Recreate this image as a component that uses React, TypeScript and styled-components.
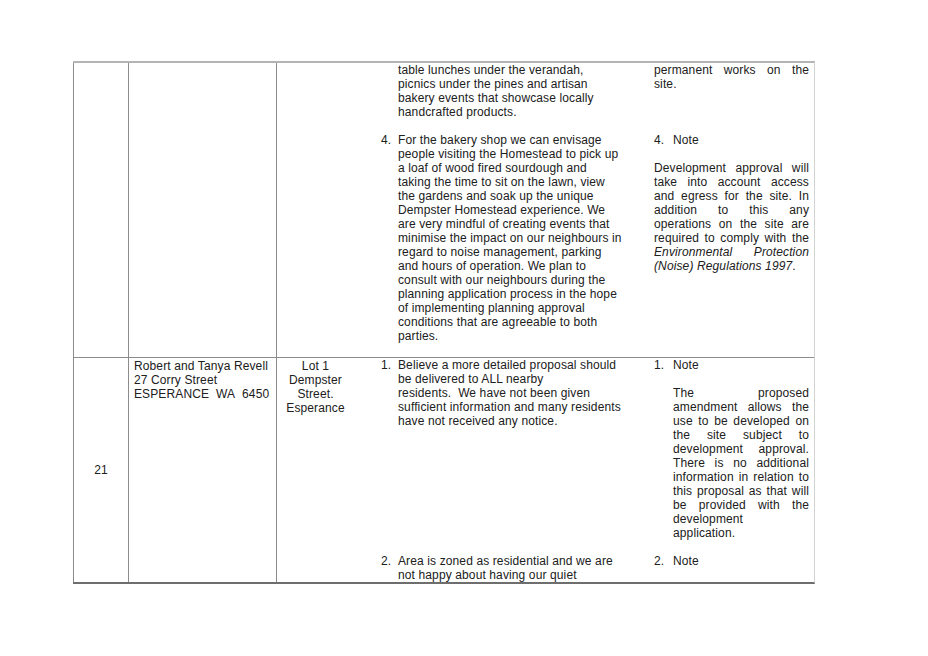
import React from 'react';
import styled, { createGlobalStyle } from 'styled-components';

const Global = createGlobalStyle`
  html, body { margin: 0; padding: 0; background: #fff; }
  body {
    font-family: "Liberation Sans", Arial, sans-serif;
    font-size: 12px;
    line-height: 14px;
    letter-spacing: 0.12px;
    color: #202020;
  }
`;

const Page = styled.div`
  width: 928px;
  height: 656px;
  padding: 61px 0 0 73px;
  box-sizing: border-box;
`;

const Table = styled.div`
  width: 741px;
  border-top: 2px solid #b4b4b4;
  border-bottom: 2px solid #6e6e6e;
  border-right: 1px solid #d2d2d2;
`;

const Row = styled.div<{ $divider?: boolean }>`
  display: grid;
  grid-template-columns: 55px 148px 78px 460px;
  border-top: ${(p) => (p.$divider ? '1px solid #8c8c8c' : 'none')};
`;

const NumCell = styled.div`
  box-sizing: border-box;
  border-left: 1px solid #8c8c8c;
  display: flex;
  align-items: center;
  justify-content: center;
`;

const NameCell = styled.div`
  box-sizing: border-box;
  border-left: 1px solid #8c8c8c;
  padding: 1px 0 0 5px;
  white-space: nowrap;
`;

const LotCell = styled.div`
  box-sizing: border-box;
  border-left: 1px solid #8c8c8c;
  padding-top: 1px;
  text-align: center;
`;

const Items = styled.div`
  display: flex;
  flex-direction: column;
`;

const ItemRow = styled.div<{ $gap?: boolean }>`
  display: grid;
  grid-template-columns: 275px 185px;
  padding-bottom: ${(p) => (p.$gap ? '14px' : '0')};
`;

const Submission = styled.div`
  display: flex;
  padding-left: 27px;
  white-space: nowrap;
`;

const Response = styled.div`
  display: flex;
  flex-direction: column;
  padding: 0 5px 0 25px;
`;

const ListLine = styled.div<{ $numWidth: number }>`
  display: flex;
  & > span:first-child {
    flex: none;
    width: ${(p) => p.$numWidth}px;
  }
`;

const Body = styled.div`
  flex: 1;
  min-width: 0;
`;

const Line = styled.div<{ $justify?: boolean }>`
  display: block;
  white-space: nowrap;
  ${(p) =>
    p.$justify
      ? `white-space: normal; text-align: justify; text-align-last: justify;`
      : ''}
`;

const Blank = styled.div`
  height: 14px;
`;

const Em = styled.span`
  font-style: italic;
`;

const SubLines: React.FC<{ num?: string; lines: string[] }> = ({ num = '', lines }) => (
  <Submission>
    <ListLine $numWidth={17}>
      <span>{num}</span>
      <Body>
        {lines.map((l, i) => (
          <Line key={i}>{l}</Line>
        ))}
      </Body>
    </ListLine>
  </Submission>
);

export default function App() {
  return (
    <Page>
      <Global />
      <Table>
        <Row>
          <NumCell />
          <NameCell />
          <LotCell />
          <Items>
            <ItemRow $gap>
              <SubLines
                lines={[
                  'table lunches under the verandah,',
                  'picnics under the pines and artisan',
                  'bakery events that showcase locally',
                  'handcrafted products.',
                ]}
              />
              <Response>
                <Line $justify>permanent works on the</Line>
                <Line>site.</Line>
              </Response>
            </ItemRow>
            <ItemRow $gap>
              <SubLines
                num="4."
                lines={[
                  'For the bakery shop we can envisage',
                  'people visiting the Homestead to pick up',
                  'a loaf of wood fired sourdough and',
                  'taking the time to sit on the lawn, view',
                  'the gardens and soak up the unique',
                  'Dempster Homestead experience. We',
                  'are very mindful of creating events that',
                  'minimise the impact on our neighbours in',
                  'regard to noise management, parking',
                  'and hours of operation. We plan to',
                  'consult with our neighbours during the',
                  'planning application process in the hope',
                  'of implementing planning approval',
                  'conditions that are agreeable to both',
                  'parties.',
                ]}
              />
              <Response>
                <ListLine $numWidth={19}>
                  <span>4.</span>
                  <Body>Note</Body>
                </ListLine>
                <Blank />
                <Line $justify>Development approval will</Line>
                <Line $justify>take into account access</Line>
                <Line $justify>and egress for the site. In</Line>
                <Line $justify>addition to this any</Line>
                <Line $justify>operations on the site are</Line>
                <Line $justify>required to comply with the</Line>
                <Line $justify>
                  <Em>Environmental Protection</Em>
                </Line>
                <Line>
                  <Em>(Noise) Regulations 1997</Em>.
                </Line>
              </Response>
            </ItemRow>
          </Items>
        </Row>
        <Row $divider>
          <NumCell>21</NumCell>
          <NameCell>
            <Line>Robert and Tanya Revell</Line>
            <Line>27 Corry Street</Line>
            <Line>ESPERANCE&nbsp; WA&nbsp; 6450</Line>
          </NameCell>
          <LotCell>
            <Line>Lot 1</Line>
            <Line>Dempster</Line>
            <Line>Street.</Line>
            <Line>Esperance</Line>
          </LotCell>
          <Items>
            <ItemRow $gap>
              <SubLines
                num="1."
                lines={[
                  'Believe a more detailed proposal should',
                  'be delivered to ALL nearby',
                  'residents.\u00a0 We have not been given',
                  'sufficient information and many residents',
                  'have not received any notice.',
                ]}
              />
              <Response>
                <ListLine $numWidth={19}>
                  <span>1.</span>
                  <Body>
                    <Line>Note</Line>
                    <Blank />
                    <Line $justify>The proposed</Line>
                    <Line $justify>amendment allows the</Line>
                    <Line $justify>use to be developed on</Line>
                    <Line $justify>the site subject to</Line>
                    <Line $justify>development approval.</Line>
                    <Line $justify>There is no additional</Line>
                    <Line $justify>information in relation to</Line>
                    <Line $justify>this proposal as that will</Line>
                    <Line $justify>be provided with the</Line>
                    <Line>development</Line>
                    <Line>application.</Line>
                  </Body>
                </ListLine>
              </Response>
            </ItemRow>
            <ItemRow>
              <SubLines
                num="2."
                lines={[
                  'Area is zoned as residential and we are',
                  'not happy about having our quiet',
                ]}
              />
              <Response>
                <ListLine $numWidth={19}>
                  <span>2.</span>
                  <Body>Note</Body>
                </ListLine>
              </Response>
            </ItemRow>
          </Items>
        </Row>
      </Table>
    </Page>
  );
}
